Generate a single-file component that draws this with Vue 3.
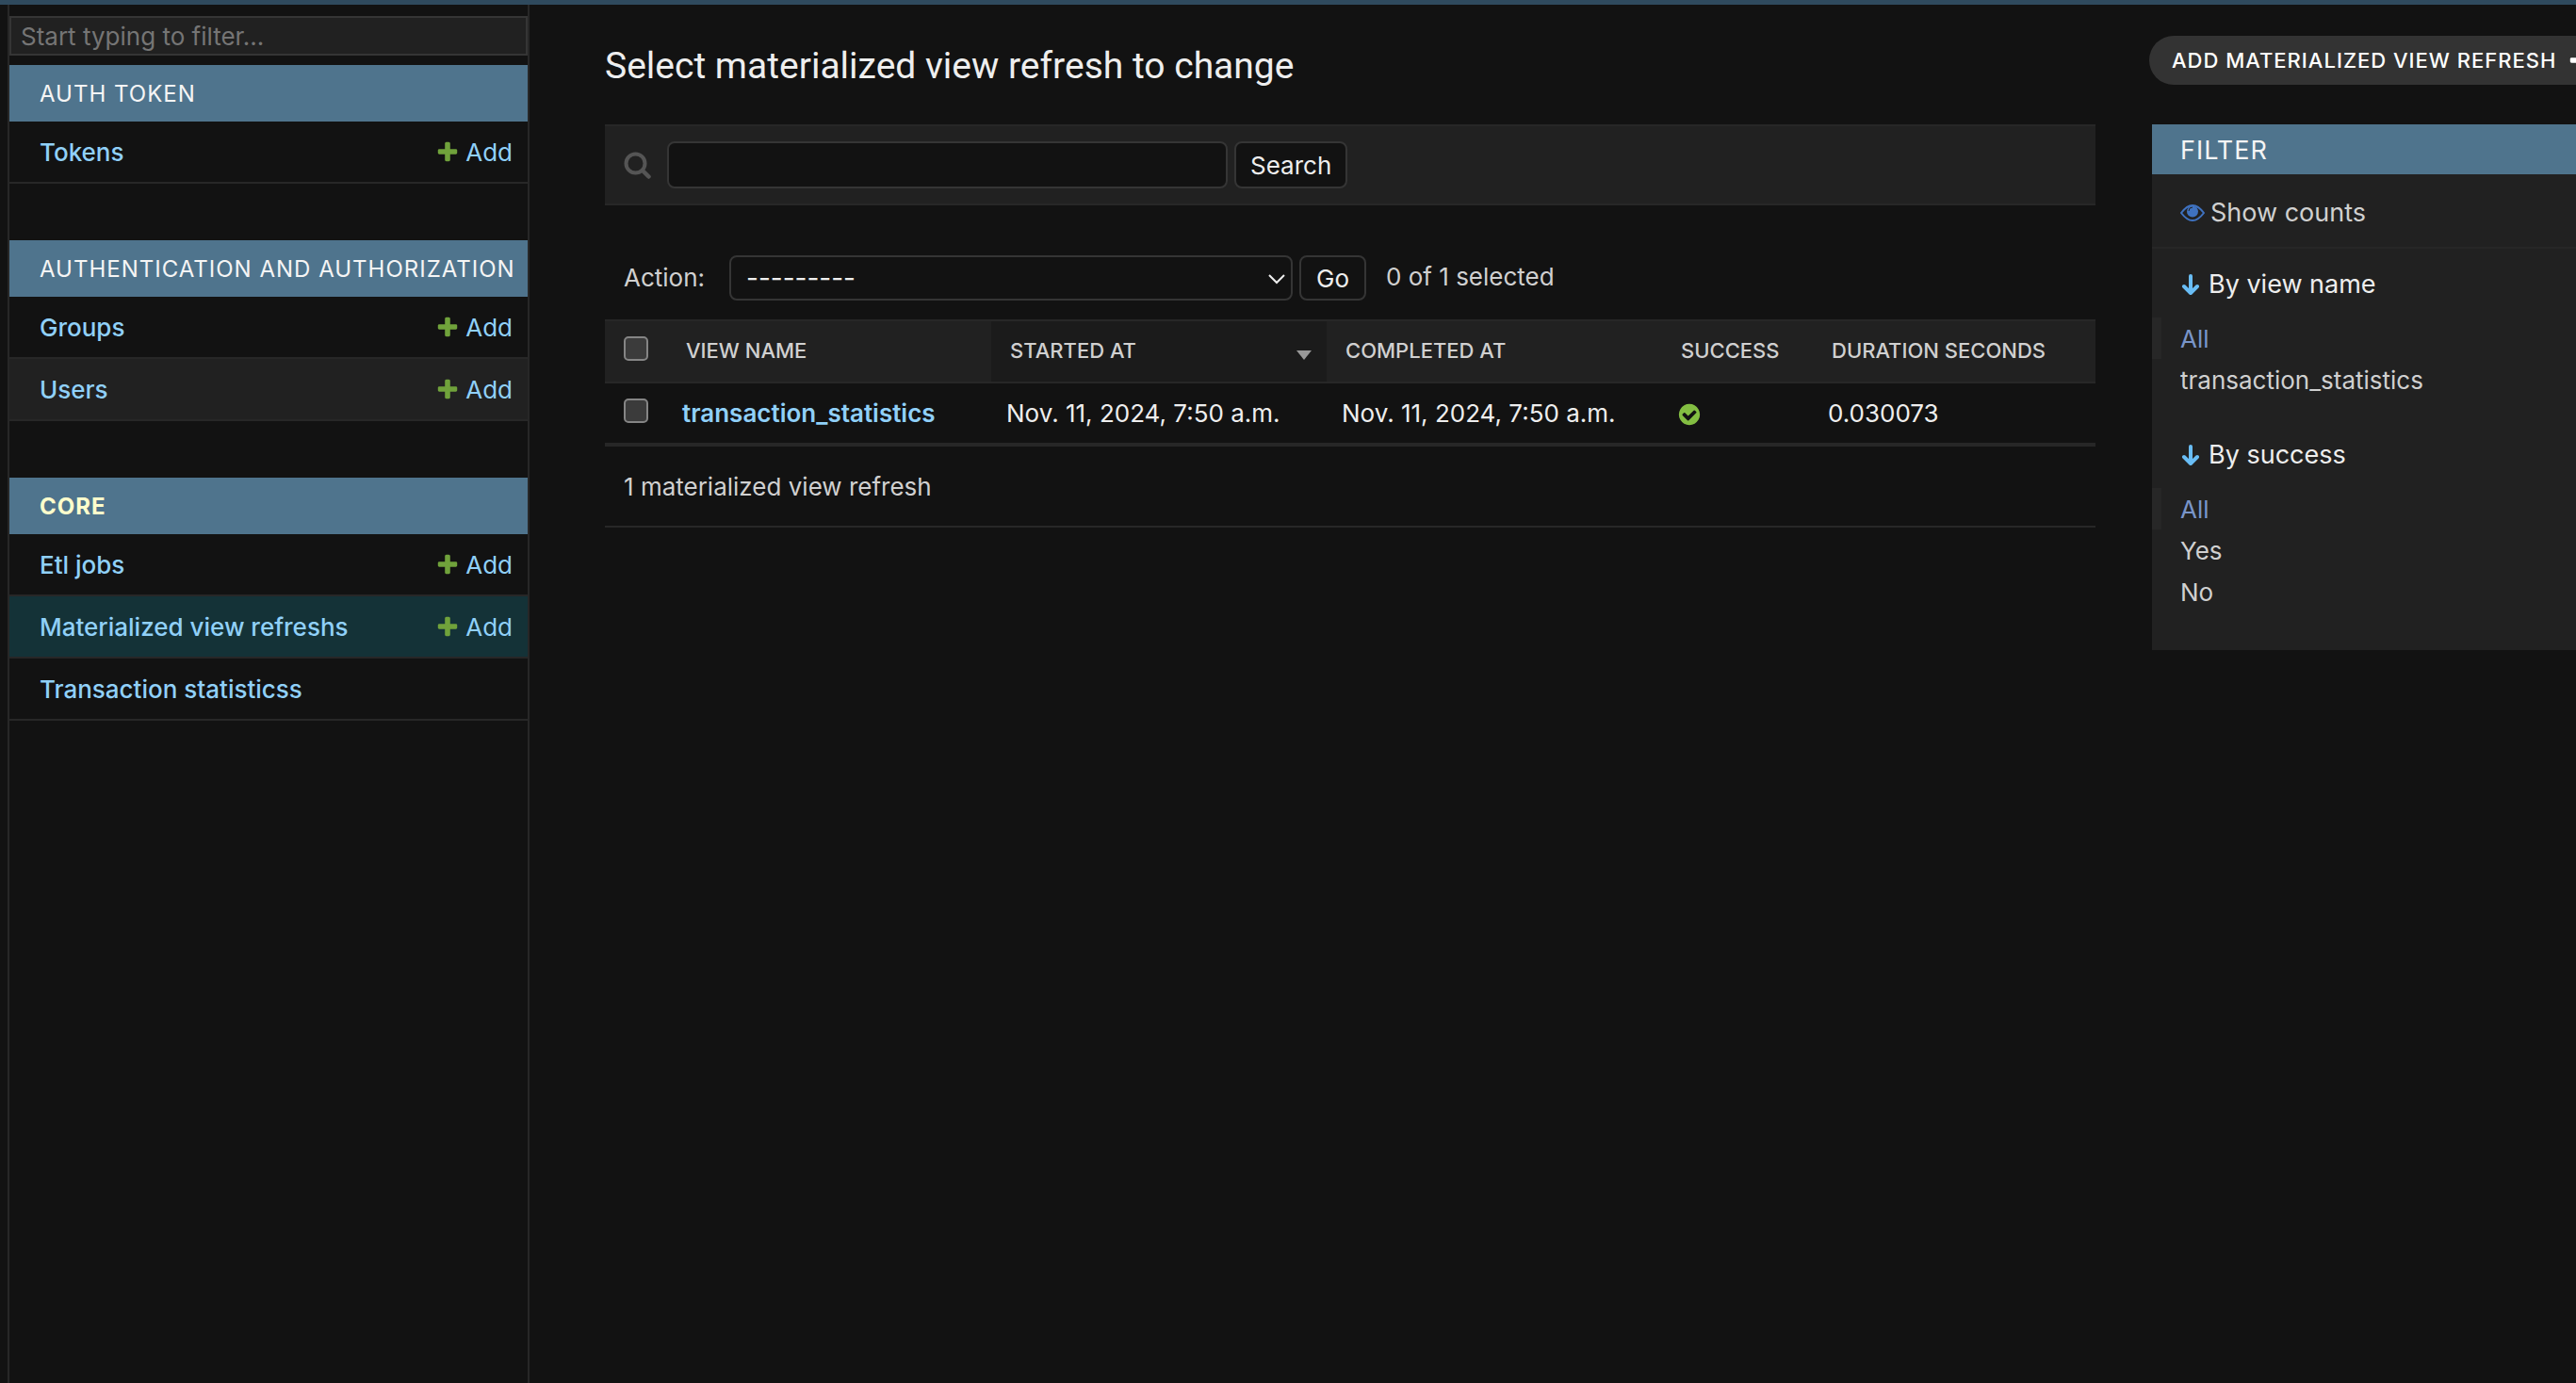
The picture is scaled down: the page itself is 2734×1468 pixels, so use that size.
<script setup>
const apps = [
  {
    name: 'Auth Token',
    models: [{ name: 'Tokens', add: true }],
  },
  {
    name: 'Authentication and Authorization',
    models: [
      { name: 'Groups', add: true },
      { name: 'Users', add: true, shaded: true },
    ],
  },
  {
    name: 'Core',
    current: true,
    models: [
      { name: 'Etl jobs', add: true },
      { name: 'Materialized view refreshs', add: true, current: true },
      { name: 'Transaction statisticss', add: false },
    ],
  },
]

const filters = [
  { title: 'By view name', options: ['All', 'transaction_statistics'] },
  { title: 'By success', options: ['All', 'Yes', 'No'] },
]
</script>

<template>
  <div class="page">
    <nav class="sidebar" aria-label="Sidebar">
      <input class="nav-filter" type="search" placeholder="Start typing to filter..." aria-label="Filter navigation items" />
      <section v-for="app in apps" :key="app.name" class="module" :class="{ 'current-app': app.current }">
        <h2><a href="#">{{ app.name }}</a></h2>
        <ul>
          <li v-for="model in app.models" :key="model.name" :class="{ shaded: model.shaded, current: model.current }">
            <a class="model" href="#">{{ model.name }}</a>
            <a v-if="model.add" class="add" href="#">
              <svg viewBox="0 0 1792 1792" aria-hidden="true">
                <path fill="#70a23b" d="M1600 796v192q0 40-28 68t-68 28h-416v416q0 40-28 68t-68 28h-192q-40 0-68-28t-28-68v-416h-416q-40 0-68-28t-28-68v-192q0-40 28-68t68-28h416v-416q0-40 28-68t68-28h192q40 0 68 28t28 68v416h416q40 0 68 28t28 68z" />
              </svg>
              Add
            </a>
          </li>
        </ul>
      </section>
    </nav>

    <main class="content">
      <header class="title-row">
        <h1>Select materialized view refresh to change</h1>
        <div class="tools">
          <a class="add-button" href="#">
            Add materialized view refresh
            <svg viewBox="0 0 1792 1792" aria-hidden="true">
              <path fill="#fff" d="M1600 796v192q0 40-28 68t-68 28h-416v416q0 40-28 68t-68 28h-192q-40 0-68-28t-28-68v-416h-416q-40 0-68-28t-28-68v-192q0-40 28-68t68-28h416v-416q0-40 28-68t68-28h192q40 0 68 28t28 68v416h416q40 0 68 28t28 68z" />
            </svg>
          </a>
        </div>
      </header>

      <div class="changelist">
        <div class="results">
          <form class="search-bar" @submit.prevent>
            <label for="searchbar" aria-label="Search">
              <svg viewBox="0 0 30 30" aria-hidden="true">
                <circle cx="12.5" cy="13.5" r="10" fill="none" stroke="#555" stroke-width="4" />
                <path d="M20 21l6.500 6.500" stroke="#555" stroke-width="4.500" stroke-linecap="round" />
              </svg>
            </label>
            <input id="searchbar" type="text" />
            <button type="submit">Search</button>
          </form>

          <form @submit.prevent>
            <div class="actions">
              <label for="action">Action:</label>
              <span class="select-wrap">
                <select id="action">
                  <option>---------</option>
                  <option>Delete selected materialized view refreshs</option>
                </select>
                <svg viewBox="0 0 18 12" aria-hidden="true">
                  <path d="M1 2l8 8l8-8" fill="none" stroke="#eee" stroke-width="2" />
                </svg>
              </span>
              <button type="submit">Go</button>
              <span class="counter">0 of 1 selected</span>
            </div>

            <table>
              <colgroup>
                <col class="c-check" />
                <col class="c-view" />
                <col class="c-date" />
                <col class="c-date" />
                <col class="c-success" />
                <col />
              </colgroup>
              <thead>
                <tr>
                  <th><input type="checkbox" aria-label="Select all objects on this page" /></th>
                  <th><a href="#">View name</a></th>
                  <th class="sorted">
                    <div>
                      <a href="#">Started at</a>
                      <svg viewBox="0 0 16 10" aria-hidden="true"><path d="M0 0h16l-8 10z" fill="#999" /></svg>
                    </div>
                  </th>
                  <th><a href="#">Completed at</a></th>
                  <th><a href="#">Success</a></th>
                  <th><a href="#">Duration seconds</a></th>
                </tr>
              </thead>
              <tbody>
                <tr>
                  <td><input type="checkbox" aria-label="Select this object for an action" /></td>
                  <td><a href="#">transaction_statistics</a></td>
                  <td>Nov. 11, 2024, 7:50 a.m.</td>
                  <td>Nov. 11, 2024, 7:50 a.m.</td>
                  <td>
                    <svg class="yes" viewBox="0 0 1792 1792" role="img" aria-label="True">
                      <path fill="#83be42" d="M1412 734q0-28-18-46l-91-90q-19-19-45-19t-45 19l-408 407-226-226q-19-19-45-19t-45 19l-91 90q-18 18-18 46 0 27 18 45l362 362q19 19 45 19 27 0 46-19l543-543q18-18 18-45zm252 162q0 209-103 385.5t-279.5 279.5-385.5 103-385.5-103-279.5-279.5-103-385.5 103-385.5 279.5-279.5 385.5-103 385.5 103 279.5 279.5 103 385.5z" />
                    </svg>
                  </td>
                  <td>0.030073</td>
                </tr>
              </tbody>
            </table>
            <p class="paginator">1 materialized view refresh</p>
          </form>
        </div>

        <aside class="filter">
          <h2>Filter</h2>
          <a class="counts" href="#">
            <svg viewBox="0 0 26 18" aria-hidden="true">
              <path d="M1 9q12-16 24 0q-12 16-24 0z" fill="none" stroke="#3f72c0" stroke-width="2" />
              <circle cx="13" cy="7.5" r="6" fill="#3f72c0" />
              <path d="M9 7q0-4 4-4" fill="none" stroke="#212121" stroke-width="1" />
            </svg>
            Show counts
          </a>
          <details v-for="group in filters" :key="group.title" open>
            <summary>
              <svg viewBox="0 0 20 24" aria-hidden="true">
                <path d="M11 3v17M4 14l7 7l7-7" fill="none" stroke="#69bdf5" stroke-width="4" stroke-linecap="round" stroke-linejoin="round" />
              </svg>
              {{ group.title }}
            </summary>
            <ul>
              <li v-for="(option, i) in group.options" :key="option" :class="{ selected: i === 0 }">
                <a href="#">{{ option }}</a>
              </li>
            </ul>
          </details>
        </aside>
      </div>
    </main>
  </div>
</template>

<style>
body {
  margin: 0;
  background: #121212;
}
</style>

<style scoped>
* {
  box-sizing: border-box;
}

.page {
  display: flex;
  min-height: 100vh;
  padding-left: 8px;
  overflow: hidden;
  border-top: 5px solid #2f4a5e;
  background: #121212;
  color: #d0d0d0;
  font-family: Inter, "Noto Sans", sans-serif;
  font-size: 26px;
  line-height: 32px;
}

h1, h2, ul, p {
  margin: 0;
  padding: 0;
  font-weight: 400;
}

ul {
  list-style: none;
}

a {
  color: #90d0f8;
  text-decoration: none;
}

svg {
  display: block;
  flex: none;
}

input, button, select {
  margin: 0;
  border: 2px solid #353535;
  border-radius: 8px;
  background: #121212;
  color: #eee;
  font: inherit;
}

/* Sidebar */
.sidebar {
  flex: 0 0 554px;
  min-width: 0;
  padding-top: 12px;
  border: solid #272727;
  border-width: 0 2px;
}

.nav-filter {
  display: block;
  width: 100%;
  height: 42px;
  margin-bottom: 10px;
  padding: 0 10px;
  border-radius: 0;
  background: #212121;
}

.nav-filter::placeholder {
  color: #757575;
}

.module {
  margin-bottom: 60px;
}

.module h2 {
  padding: 15px 12px 13px 32px;
  background: #4f748d;
  font-size: 24px;
  letter-spacing: 1px;
  text-transform: uppercase;
  white-space: nowrap;
}

.module h2 a {
  color: #f5f5f5;
}

.current-app h2 a {
  color: #ffffcc;
  font-weight: 700;
}

.module li {
  display: flex;
  justify-content: space-between;
  padding: 17px 16px 15px 32px;
  border-bottom: 2px solid #272727;
}

.module li.shaded {
  background: #212121;
}

.module li.current {
  background: #143237;
}

.model {
  font-weight: 500;
}

.add {
  display: flex;
  gap: 6px;
}

.add svg {
  width: 26px;
  height: 26px;
  margin-top: 2px;
}

/* Content */
.content {
  flex: 1;
  min-width: 0;
  padding: 33px 0 0 80px;
}

.title-row {
  display: flex;
  justify-content: space-between;
  margin-bottom: 42px;
}

h1 {
  padding-top: 12px;
  color: #eee;
  font-family: Roboto, Inter, sans-serif;
  font-size: 39px;
  line-height: 40px;
}

.tools {
  flex: 0 0 453px;
  min-width: 0;
}

.add-button {
  display: inline-flex;
  align-items: center;
  gap: 12px;
  height: 52px;
  padding: 0 24px;
  border-radius: 26px;
  background: #333;
  color: #fff;
  font-size: 22px;
  font-weight: 500;
  letter-spacing: 1px;
  text-transform: uppercase;
  white-space: nowrap;
}

.add-button svg {
  width: 26px;
  height: 26px;
}

.changelist {
  display: flex;
  align-items: flex-start;
  gap: 60px;
}

.results {
  flex: 1;
  min-width: 0;
}

.search-bar {
  display: flex;
  align-items: center;
  gap: 7px;
  height: 86px;
  margin-bottom: 52px;
  padding: 0 20px;
  border: solid #272727;
  border-width: 2px 0;
  background: #212121;
}

.search-bar label {
  margin-right: 9px;
}

.search-bar label svg {
  width: 30px;
  height: 30px;
}

.search-bar input {
  width: 595px;
  height: 50px;
}

.search-bar button {
  height: 50px;
  padding: 2px 15px 0;
}

.actions {
  display: flex;
  align-items: center;
  gap: 7px;
  height: 50px;
  margin-bottom: 19px;
  padding-left: 20px;
}

.actions label {
  width: 105px;
}

.select-wrap {
  position: relative;
  flex: 0 0 598px;
}

.select-wrap svg {
  position: absolute;
  top: 19px;
  right: 8px;
  width: 18px;
  height: 12px;
}

select {
  width: 100%;
  height: 48px;
  padding: 0 16px;
  font-size: 28px;
  appearance: none;
}

.actions button {
  height: 48px;
  padding: 2px 16px 0;
}

.counter {
  padding-bottom: 3px;
  margin-left: 14px;
}

table {
  width: 100%;
  border-collapse: collapse;
  table-layout: fixed;
}

.c-check { width: 66px; }
.c-view { width: 344px; }
.c-date { width: 356px; }
.c-success { width: 160px; }

th {
  height: 66px;
  padding: 0 20px 2px;
  border: solid #272727;
  border-width: 2px 0;
  background: #212121;
  font-size: 22px;
  font-weight: 500;
  text-align: left;
  text-transform: uppercase;
  white-space: nowrap;
}

th a {
  color: #d0d0d0;
}

th.sorted {
  padding-right: 16px;
  background: #1b1b1b;
}

th div {
  display: flex;
  align-items: center;
  justify-content: space-between;
}

th svg {
  width: 16px;
  height: 10px;
  margin-top: 10px;
}

td {
  height: 66px;
  padding: 0 16px;
  border-bottom: 4px solid #272727;
  color: #eee;
  white-space: nowrap;
}

td a {
  font-weight: 600;
}

td:first-child, th:first-child {
  padding: 0 0 6px 20px;
}

input[type="checkbox"] {
  display: block;
  width: 26px;
  height: 26px;
  border-color: #858585;
  border-radius: 5px;
  background: #3b3b3b;
  appearance: none;
}

.yes {
  width: 26px;
  height: 26px;
  margin-top: 3px;
}

.paginator {
  padding: 27px 20px 25px;
  border-bottom: 2px solid #272727;
}

/* Filter panel */
.filter {
  flex: 0 0 450px;
  padding-bottom: 20px;
  background: #212121;
}

.filter h2 {
  padding: 12px 30px 9px;
  background: #4f748d;
  color: #f5f5f5;
  font-size: 27px;
  letter-spacing: 1px;
  text-transform: uppercase;
}

.counts {
  display: flex;
  align-items: center;
  gap: 6px;
  height: 79px;
  padding: 4px 30px 0;
  border-bottom: 2px solid #272727;
  color: #d0d0d0;
  font-size: 27px;
}

.counts svg {
  width: 26px;
  height: 18px;
}

summary {
  display: flex;
  align-items: center;
  gap: 10px;
  height: 73px;
  padding: 2px 30px 0;
  color: #eee;
  font-size: 27px;
}

summary svg {
  width: 20px;
  height: 24px;
}

details {
  margin-bottom: 20px;
}

.filter li {
  height: 44px;
  padding: 7px 20px 5px;
  border-left: 10px solid transparent;
}

.filter li.selected {
  border-left-color: #272727;
}

.filter li a {
  color: #d0d0d0;
}

.filter li.selected a {
  color: #7995c9;
}
</style>
